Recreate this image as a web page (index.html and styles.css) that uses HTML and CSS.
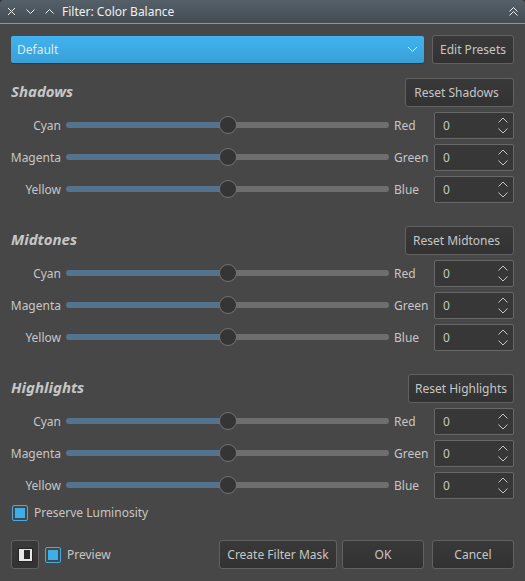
FILE: index.html
```html
<!DOCTYPE html>
<html lang="en">
<head>
<meta charset="utf-8">
<title>Filter: Color Balance</title>
<link rel="stylesheet" href="styles.css">
</head>
<body>
<main class="dialog">
  <header class="titlebar">
    <button class="wm" type="button" aria-label="Close"><svg width="9" height="9" viewBox="0 0 9 9"><path d="M1 1l7 7M8 1L1 8"/></svg></button>
    <button class="wm" type="button" aria-label="Minimize"><svg width="9" height="9" viewBox="0 0 9 9"><path d="M.5 2.500l4 4 4-4"/></svg></button>
    <button class="wm" type="button" aria-label="Maximize"><svg width="9" height="9" viewBox="0 0 9 9"><path d="M.5 6.500l4-4 4 4"/></svg></button>
    <h1 class="title">Filter: Color Balance</h1>
    <button class="wm" type="button" aria-label="Shade"><svg width="9" height="9" viewBox="0 0 9 9"><path d="M.5 4.500l4-4 4 4M.5 8.500l4-4 4 4"/></svg></button>
  </header>
  <form class="content">
    <div class="presets">
      <div class="combo">
        <select class="combo-select" aria-label="Preset"><option>Default</option></select>
        <svg class="combo-arrow" width="11" height="7" viewBox="0 0 11 7"><path d="M1 1l4.500 4.500L10 1"/></svg>
      </div>
      <button class="btn edit" type="button">Edit Presets</button>
    </div>

    <section class="group">
      <div class="group-head"><h2>Shadows</h2><button class="btn reset" type="button">Reset Shadows</button></div>
      <div class="row">
        <label class="from" for="s1">Cyan</label><input class="slider" id="s1" type="range" min="-100" max="100" value="0"><label class="to" for="n1">Red</label>
        <div class="spin"><input id="n1" type="number" value="0"><svg width="10" height="17" viewBox="0 0 10 17"><path d="M.5 5.500L5 1l4.500 4.500M.5 11.500L5 16l4.500-4.500"/></svg></div>
      </div>
      <div class="row">
        <label class="from" for="s2">Magenta</label><input class="slider" id="s2" type="range" min="-100" max="100" value="0"><label class="to" for="n2">Green</label>
        <div class="spin"><input id="n2" type="number" value="0"><svg width="10" height="17" viewBox="0 0 10 17"><path d="M.5 5.500L5 1l4.500 4.500M.5 11.500L5 16l4.500-4.500"/></svg></div>
      </div>
      <div class="row">
        <label class="from" for="s3">Yellow</label><input class="slider" id="s3" type="range" min="-100" max="100" value="0"><label class="to" for="n3">Blue</label>
        <div class="spin"><input id="n3" type="number" value="0"><svg width="10" height="17" viewBox="0 0 10 17"><path d="M.5 5.500L5 1l4.500 4.500M.5 11.500L5 16l4.500-4.500"/></svg></div>
      </div>
    </section>

    <section class="group">
      <div class="group-head"><h2>Midtones</h2><button class="btn reset" type="button">Reset Midtones</button></div>
      <div class="row">
        <label class="from" for="s4">Cyan</label><input class="slider" id="s4" type="range" min="-100" max="100" value="0"><label class="to" for="n4">Red</label>
        <div class="spin"><input id="n4" type="number" value="0"><svg width="10" height="17" viewBox="0 0 10 17"><path d="M.5 5.500L5 1l4.500 4.500M.5 11.500L5 16l4.500-4.500"/></svg></div>
      </div>
      <div class="row">
        <label class="from" for="s5">Magenta</label><input class="slider" id="s5" type="range" min="-100" max="100" value="0"><label class="to" for="n5">Green</label>
        <div class="spin"><input id="n5" type="number" value="0"><svg width="10" height="17" viewBox="0 0 10 17"><path d="M.5 5.500L5 1l4.500 4.500M.5 11.500L5 16l4.500-4.500"/></svg></div>
      </div>
      <div class="row">
        <label class="from" for="s6">Yellow</label><input class="slider" id="s6" type="range" min="-100" max="100" value="0"><label class="to" for="n6">Blue</label>
        <div class="spin"><input id="n6" type="number" value="0"><svg width="10" height="17" viewBox="0 0 10 17"><path d="M.5 5.500L5 1l4.500 4.500M.5 11.500L5 16l4.500-4.500"/></svg></div>
      </div>
    </section>

    <section class="group">
      <div class="group-head"><h2>Highlights</h2><button class="btn" type="button">Reset Highlights</button></div>
      <div class="row">
        <label class="from" for="s7">Cyan</label><input class="slider" id="s7" type="range" min="-100" max="100" value="0"><label class="to" for="n7">Red</label>
        <div class="spin"><input id="n7" type="number" value="0"><svg width="10" height="17" viewBox="0 0 10 17"><path d="M.5 5.500L5 1l4.500 4.500M.5 11.500L5 16l4.500-4.500"/></svg></div>
      </div>
      <div class="row">
        <label class="from" for="s8">Magenta</label><input class="slider" id="s8" type="range" min="-100" max="100" value="0"><label class="to" for="n8">Green</label>
        <div class="spin"><input id="n8" type="number" value="0"><svg width="10" height="17" viewBox="0 0 10 17"><path d="M.5 5.500L5 1l4.500 4.500M.5 11.500L5 16l4.500-4.500"/></svg></div>
      </div>
      <div class="row">
        <label class="from" for="s9">Yellow</label><input class="slider" id="s9" type="range" min="-100" max="100" value="0"><label class="to" for="n9">Blue</label>
        <div class="spin"><input id="n9" type="number" value="0"><svg width="10" height="17" viewBox="0 0 10 17"><path d="M.5 5.500L5 1l4.500 4.500M.5 11.500L5 16l4.500-4.500"/></svg></div>
      </div>
    </section>

    <label class="check luminosity"><input type="checkbox" checked>Preserve Luminosity</label>

    <footer class="actions">
      <button class="btn tool" type="button" aria-label="Split preview"><svg width="16" height="16" viewBox="0 0 16 16"><rect x="1" y="1" width="15" height="14" fill="#232323"/><rect x="2" y="2" width="13" height="12" fill="#e6e6e4"/><rect x="7" y="3" width="6" height="9" fill="#26282b"/></svg></button>
      <label class="check preview"><input type="checkbox" checked>Preview</label>
      <button class="btn mask" type="button">Create Filter Mask</button>
      <button class="btn wide ok" type="button">OK</button>
      <button class="btn wide" type="button">Cancel</button>
    </footer>
  </form>
</main>
</body>
</html>
```
FILE: styles.css
```css
* {
  box-sizing: border-box;
}

body {
  margin: 0;
  background: #303030;
  color: #c6c6c6;
  font: 12px/18px "Noto Sans", sans-serif;
}

button,
input,
select {
  margin: 0;
  color: inherit;
  font: inherit;
}

svg {
  display: block;
  fill: none;
  stroke: currentColor;
}

.dialog {
  min-height: 100vh;
  background: #474747;
  border-radius: 4px 4px 0 0;
  overflow: hidden;
}

.titlebar {
  display: flex;
  align-items: center;
  gap: 10px;
  height: 24px;
  padding: 0 7px;
  border-bottom: 1px solid #3daee9;
  background: linear-gradient(#566069, #434c53);
  color: #eff0f1;
}

.wm {
  padding: 0;
  border: 0;
  background: none;
}

.title {
  flex: 1;
  margin: 0 0 0 -2px;
  font-size: 12px;
  font-weight: 400;
  line-height: 19px;
}

.content {
  padding: 11px;
}

.presets {
  display: flex;
  align-items: center;
  gap: 8px;
  margin-bottom: 14px;
}

.combo {
  position: relative;
  flex: 1;
}

.combo-select {
  display: block;
  width: 100%;
  height: 27px;
  padding: 0 6px;
  appearance: none;
  border: 0;
  border-radius: 2px;
  background: linear-gradient(#41b3f0, #389fd6);
  box-shadow: 0 1px 1px #383838;
  color: #dfe9ef;
}

.combo-arrow {
  position: absolute;
  top: 10px;
  right: 6px;
  color: #eff0f1;
  pointer-events: none;
}

.btn {
  height: 29px;
  padding: 0 6px;
  border: 1px solid #616161;
  border-radius: 3px;
  background: linear-gradient(#393939, #323232);
  white-space: nowrap;
}

.edit {
  min-width: 82px;
}

.reset {
  min-width: 109px;
  padding-right: 12px;
}

.group {
  display: grid;
  gap: 5px;
  margin-bottom: 23px;
}

.group:last-of-type {
  margin-bottom: 5px;
}

.group-head {
  display: flex;
  align-items: center;
  justify-content: space-between;
}

h2 {
  margin: 0;
  padding-bottom: 4px;
  font-size: 15px;
  font-style: italic;
  font-weight: 700;
}

.row {
  display: grid;
  grid-template-columns: 50px 1fr 35px 80px;
  align-items: center;
  gap: 5px;
}

.row label {
  line-height: 19px;
}

.from {
  justify-self: end;
}

.slider {
  align-self: start;
  width: 100%;
  height: 26px;
  appearance: none;
  background: none;
}

.slider::-webkit-slider-runnable-track {
  height: 6px;
  border-radius: 3px;
  background: linear-gradient(90deg, #53738f 50%, #6e6e6e 50%);
}

.slider::-webkit-slider-thumb {
  width: 18px;
  height: 18px;
  margin-top: -6px;
  appearance: none;
  border: 1px solid #737373;
  border-radius: 50%;
  background: #353535;
}

.spin {
  position: relative;
}

.spin input {
  display: block;
  width: 100%;
  height: 27px;
  padding: 0 8px 1px;
  appearance: textfield;
  border: 1px solid #686868;
  border-radius: 2px;
  background: #373737;
}

.spin input::-webkit-inner-spin-button {
  appearance: none;
}

.spin svg {
  position: absolute;
  top: 5px;
  right: 6px;
  pointer-events: none;
}

.check {
  display: flex;
  align-items: center;
  gap: 6px;
}

.check input {
  width: 16px;
  height: 16px;
  appearance: none;
  border: 1px solid #3daee9;
  border-radius: 2px;
  background: #3daee9 content-box;
  padding: 2px;
}

.luminosity {
  width: max-content;
  margin: 0 0 18px 1px;
}

.actions {
  display: flex;
  align-items: center;
}

.tool {
  width: 28px;
  padding: 0 5px;
}

.tool svg {
  stroke: none;
}

.preview {
  margin: 0 auto 0 6px;
}

.mask {
  min-width: 118px;
  margin-right: 5px;
}

.wide {
  width: 82px;
}

.ok {
  margin-right: 8px;
}
```
